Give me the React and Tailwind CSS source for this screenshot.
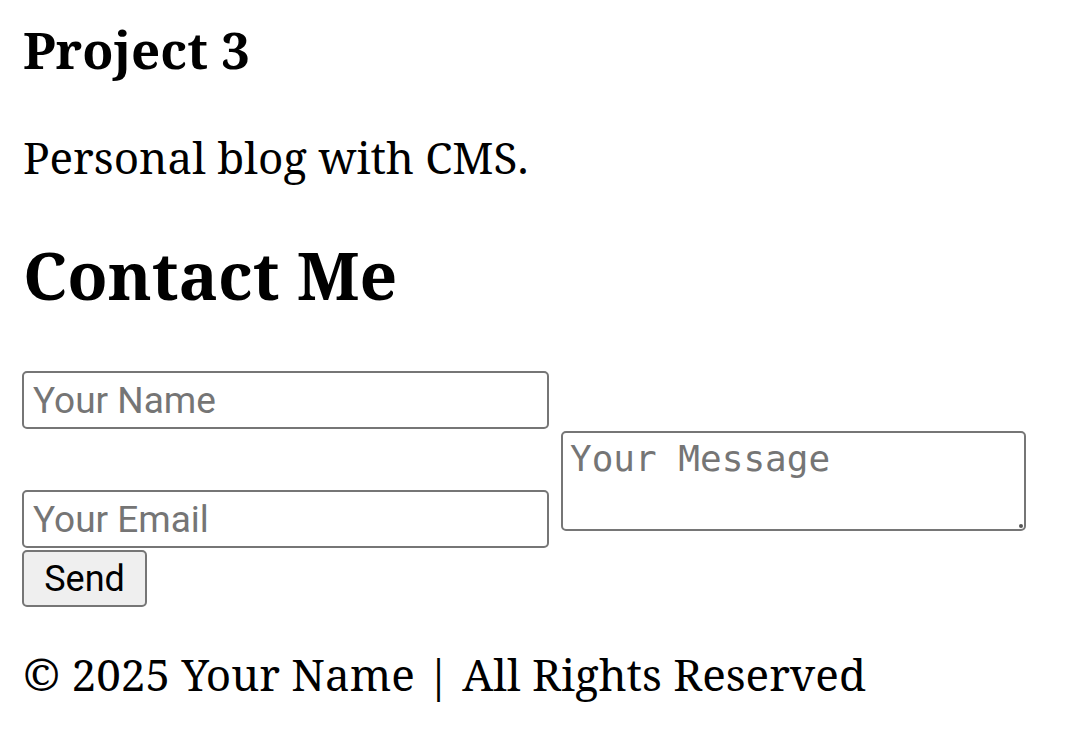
import React from "react";

export default function App() {
  return (
    <div className="min-h-screen bg-white text-black pl-[22px]">
      <h3 className="font-['Noto_Serif','DejaVu_Serif',serif] font-bold text-[51px] leading-[51px] mt-[24px] pl-[1px]">
        Project 3
      </h3>
      <p className="font-['Noto_Serif','DejaVu_Serif',serif] text-[44px] leading-[44px] mt-[60px] pl-[1px]">
        Personal blog with CMS.
      </p>
      <h2 className="font-['Noto_Serif','DejaVu_Serif',serif] font-bold text-[66px] leading-[66px] mt-[62px] pl-[1px]">
        Contact Me
      </h2>
      <form className="mt-[64px] flex flex-col items-start" onSubmit={(e) => e.preventDefault()}>
        <input
          type="text"
          placeholder="Your Name"
          className="box-border w-[527px] h-[58px] border-2 border-[#767676] rounded-[5px] pl-[9px] text-[37px] font-['Roboto',sans-serif] placeholder:text-[#757575] outline-none"
        />
        <div className="flex items-end gap-[12px] mt-[2px]">
          <input
            type="email"
            placeholder="Your Email"
            className="box-border w-[527px] h-[58px] border-2 border-[#767676] rounded-[5px] pl-[9px] text-[37px] font-['Roboto',sans-serif] placeholder:text-[#757575] outline-none"
          />
          <div className="relative mb-[17px]">
            <textarea
              placeholder="Your Message"
              className="block w-[465px] h-[100px] border-2 border-[#767676] rounded-[5px] px-[7px] pt-[5px] text-[36px] leading-[42px] font-['DejaVu_Sans_Mono',monospace] placeholder:text-[#757575] resize-none outline-none"
            />
            <span className="absolute right-[3px] bottom-[3px] w-[4px] h-[4px] rounded-full bg-[#555]" />
          </div>
        </div>
        <button
          type="submit"
          className="mt-[2px] w-[125px] h-[57px] bg-[#efefef] border-2 border-[#767676] rounded-[5px] text-[36px] font-['Roboto',sans-serif] text-black leading-none"
        >
          Send
        </button>
      </form>
      <p className="font-['Noto_Serif','DejaVu_Serif',serif] text-[44px] leading-[44px] mt-[45px] pl-[1px]">
        © 2025 Your Name | All Rights Reserved
      </p>
    </div>
  );
}
